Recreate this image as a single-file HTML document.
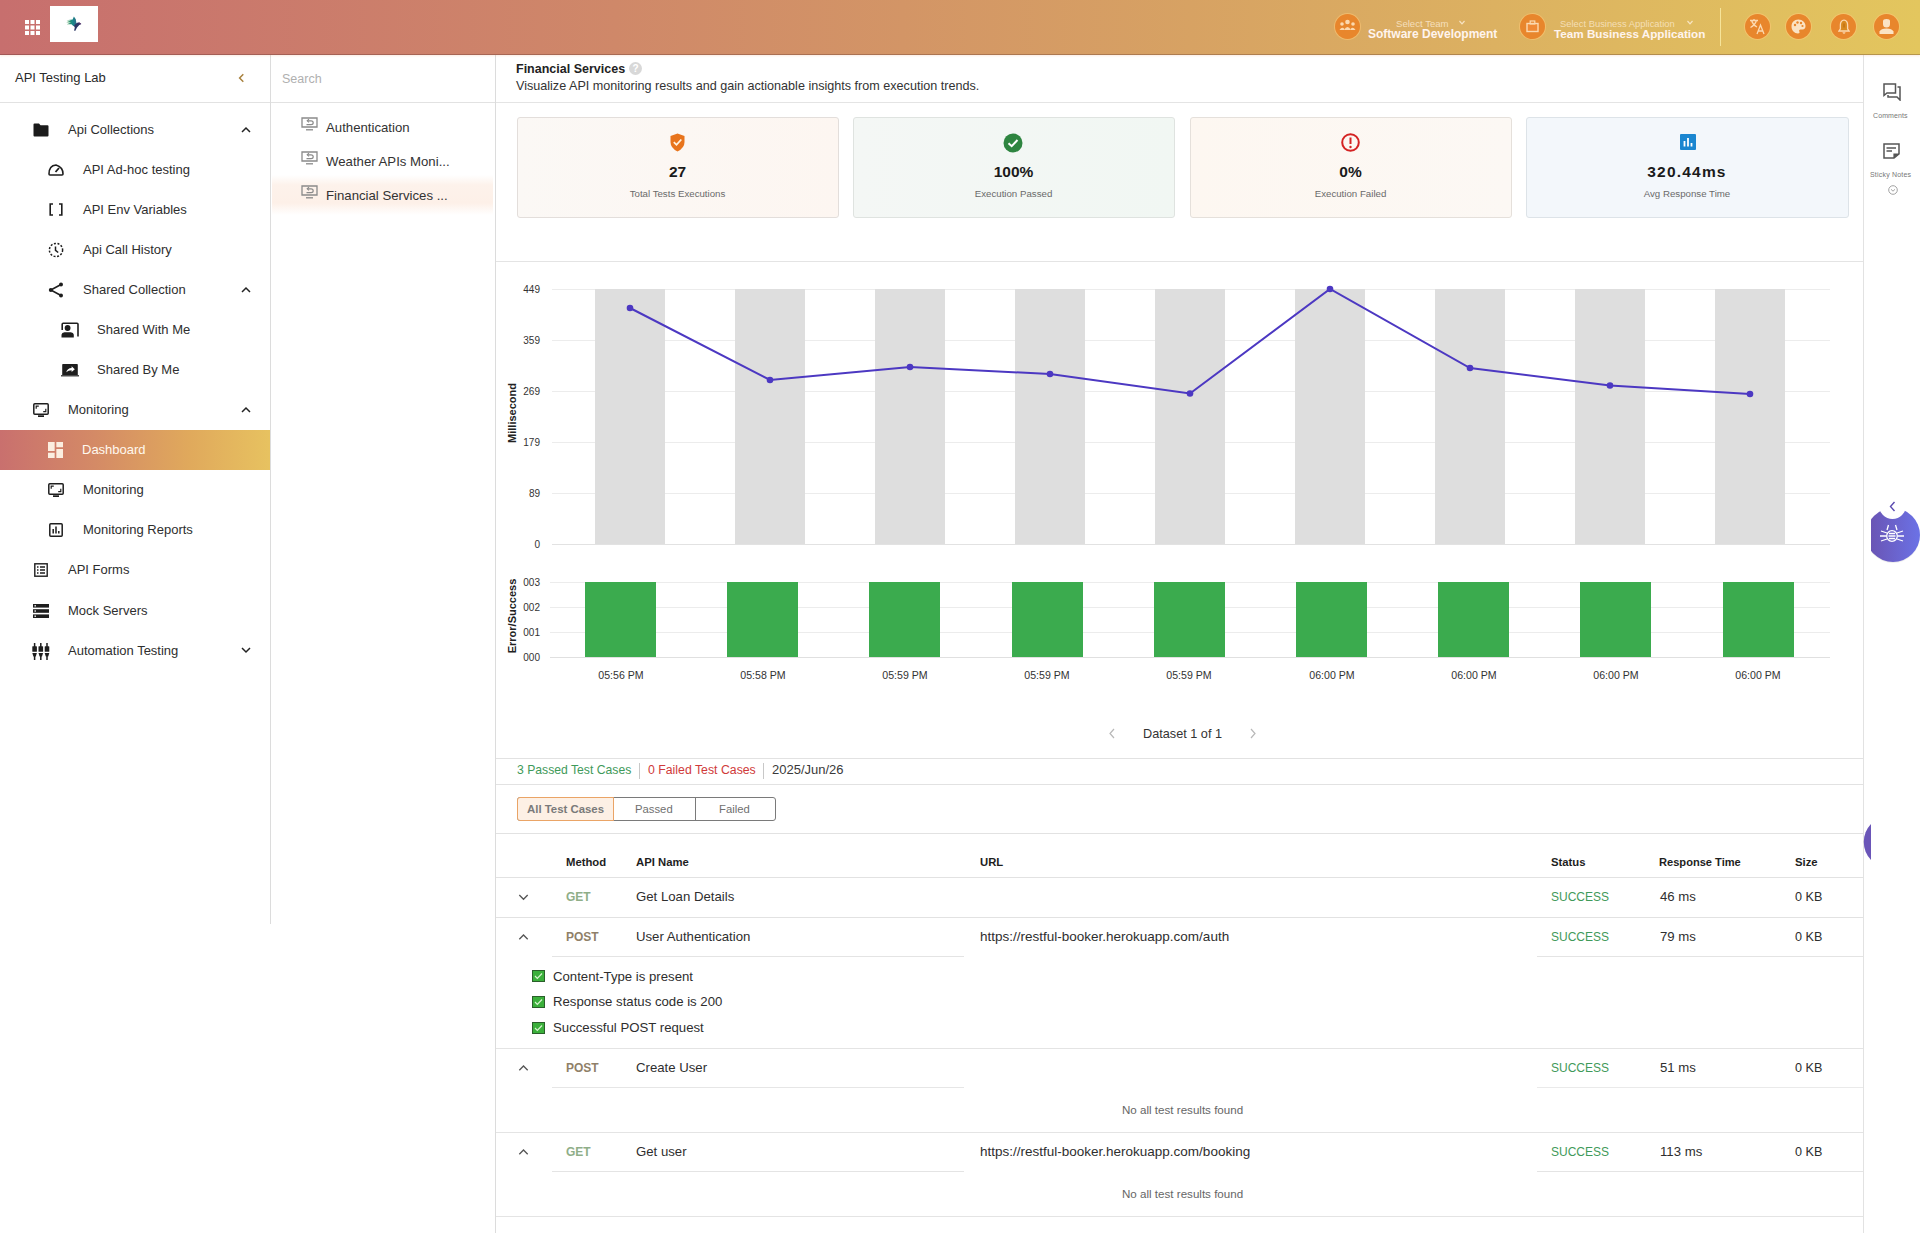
<!DOCTYPE html>
<html><head><meta charset="utf-8">
<style>
*{box-sizing:border-box;margin:0;padding:0}
html,body{width:1920px;height:1233px;overflow:hidden;background:#fff;font-family:"Liberation Sans",sans-serif;color:#2b2b2b}
.abs{position:absolute}
.t{position:absolute;white-space:nowrap;line-height:1}
#hdr{position:absolute;left:0;top:0;width:1920px;height:55px;box-shadow:inset 0 -1px 0 rgba(70,30,30,.28),0 1px 2px rgba(230,150,100,.18);z-index:5;background:linear-gradient(90deg,#c76f6e 0%,#cf8869 32%,#d7a263 62%,#e3c65e 100%);}
.hc{position:absolute;width:25px;height:25px;border-radius:50%;background:#e8862c;box-shadow:0 0 0 1px rgba(255,200,120,.55)}
.hl{height:1px;background:#e3e3e3;position:absolute}
.vl{width:1px;background:#dcdcdc;position:absolute}
.nav{position:absolute;font-size:13px;color:#2e2e2e;white-space:nowrap;line-height:1}
.ico{position:absolute}
</style></head><body>

<!-- HEADER -->
<div id="hdr">
  <svg class="abs" style="left:25px;top:20px" width="15" height="15" viewBox="0 0 15 15" fill="#fff">
    <rect x="0" y="0" width="4" height="4"/><rect x="5.5" y="0" width="4" height="4"/><rect x="11" y="0" width="4" height="4"/>
    <rect x="0" y="5.5" width="4" height="4"/><rect x="5.5" y="5.5" width="4" height="4"/><rect x="11" y="5.5" width="4" height="4"/>
    <rect x="0" y="11" width="4" height="4"/><rect x="5.5" y="11" width="4" height="4"/><rect x="11" y="11" width="4" height="4"/>
  </svg>
  <div class="abs" style="left:50px;top:6px;width:48px;height:36px;background:#fff"></div>
  <svg class="abs" style="left:60px;top:10px" width="30" height="28" viewBox="60 10 30 28">
    <defs><linearGradient id="bd" x1="0" y1="0" x2="1" y2="0"><stop offset="0" stop-color="#3a9a4a"/><stop offset="0.6" stop-color="#1a8a88"/><stop offset="1" stop-color="#2a6a8a"/></linearGradient></defs>
    <path d="M66.3 20.3 L71 20.6 L66.3 22.2 L71 22.5 L66.8 24.3 L71.5 24.2 L73.5 26.3 L76.6 24.5 L75.8 19.2 L73.9 16.6 L72.6 19.6Z" fill="url(#bd)"/>
    <path d="M73.8 25.8 L77 22.8 L79.3 22.6 L81.3 24 L79.3 25.1 L77 27.5 L75.2 30.9 L74.1 30.5 L74.8 27.6Z" fill="#2a3563"/>
    <path d="M78.2 22.7 L79.5 22.5 L81.3 24 L79.4 24.6Z" fill="#5a2f6a"/>
  </svg>

  <div class="hc" style="left:1335px;top:14px"></div>
  <svg class="abs" style="left:1339px;top:19px" width="17" height="14" viewBox="0 0 17 14" fill="#fbd9b0">
    <circle cx="8.5" cy="3" r="2.3"/><circle cx="3" cy="5" r="1.8"/><circle cx="14" cy="5" r="1.8"/>
    <path d="M5 11 Q8.5 5 12 11 Z"/><path d="M0.5 11 Q3 7 5.5 10 L5 11Z"/><path d="M16.5 11 Q14 7 11.5 10 L12 11Z"/>
  </svg>
  <div class="t" style="left:1396px;top:19px;font-size:9.6px;color:rgba(255,240,220,.75)">Select Team</div>
  <svg class="abs" style="left:1459px;top:20px" width="6" height="5" viewBox="0 0 6 5"><path d="M0.5 1 L3 3.8 L5.5 1" stroke="rgba(255,240,220,.8)" stroke-width="1.2" fill="none"/></svg>
  <div class="t" style="left:1368px;top:28px;font-size:12px;font-weight:700;color:#fff4ee">Software Development</div>

  <div class="hc" style="left:1520px;top:14px"></div>
  <svg class="abs" style="left:1526px;top:20px" width="13" height="13" viewBox="0 0 13 13"><rect x="1" y="3.5" width="11" height="8" fill="#f08a35" stroke="#fbd9b0" stroke-width="1.4"/><rect x="4.2" y="1" width="4.6" height="3" fill="none" stroke="#fbd9b0" stroke-width="1.2"/></svg>
  <div class="t" style="left:1560px;top:19px;font-size:9.4px;color:rgba(255,240,220,.7)">Select Business Application</div>
  <svg class="abs" style="left:1687px;top:20px" width="6" height="5" viewBox="0 0 6 5"><path d="M0.5 1 L3 3.8 L5.5 1" stroke="rgba(255,240,220,.8)" stroke-width="1.2" fill="none"/></svg>
  <div class="t" style="left:1554px;top:28px;font-size:11.7px;font-weight:700;color:#fff4ee">Team Business Application</div>

  <div class="abs" style="left:1720px;top:8px;width:1px;height:38px;background:#f6e49a"></div>

  <div class="hc" style="left:1745px;top:14px"></div>
  <svg class="abs" style="left:1749px;top:18px" width="17" height="17" viewBox="0 0 17 17" stroke="#fbd9b0" stroke-width="1.3" fill="none">
    <path d="M1 2.5 H9 M5 1 V2.5 M2.5 2.5 Q4 7 8 9 M7.5 2.5 Q6 7 1.5 9.5"/>
    <path d="M8 16 L11.5 7 L15 16 M9.2 13 H13.8"/>
  </svg>
  <div class="hc" style="left:1786px;top:14px"></div>
  <svg class="abs" style="left:1790px;top:18px" width="17" height="17" viewBox="0 0 17 17">
    <path d="M8.5 1.5 C4 1.5 1.5 4.5 1.5 8.5 C1.5 12.5 4.5 15.5 8 15.5 C9.5 15.5 9.8 14.5 9.3 13.5 C8.8 12.5 9.2 11.5 10.5 11.5 L12.5 11.5 C14.5 11.5 15.5 10 15.5 8 C15.5 4.5 12.5 1.5 8.5 1.5Z" fill="#fbe3c4"/>
    <circle cx="5" cy="7" r="1.2" fill="#e8862c"/><circle cx="7.5" cy="4.5" r="1.2" fill="#e8862c"/><circle cx="11" cy="5" r="1.2" fill="#e8862c"/><circle cx="12.5" cy="8" r="1.1" fill="#e8862c"/>
  </svg>
  <div class="hc" style="left:1831px;top:14px"></div>
  <svg class="abs" style="left:1838px;top:19px" width="12" height="16" viewBox="0 0 12 16">
    <path d="M6 1.2 C3.6 1.2 2.4 3.3 2.4 5.8 L2.4 9.8 L1 12 H11 L9.6 9.8 L9.6 5.8 C9.6 3.3 8.4 1.2 6 1.2Z" fill="#d9891f" stroke="#fbd9b0" stroke-width="1.3"/>
    <path d="M6 4.5 V8.5" stroke="#b86a10" stroke-width="1.1"/>
    <path d="M4.8 13.4 Q6 14.8 7.2 13.4" stroke="#fbd9b0" stroke-width="1.1" fill="none"/>
  </svg>
  <div class="hc" style="left:1874px;top:14px"></div>
  <svg class="abs" style="left:1878px;top:18px" width="17" height="17" viewBox="0 0 17 17" fill="#fbe3c4">
    <path d="M5 3 Q5 1 8.5 1 Q12 1 12 3 L12 6 Q12 9.5 8.5 9.5 Q5 9.5 5 6Z"/>
    <path d="M1.5 16 L1.5 13.5 Q3 10.5 8.5 10.5 Q14 10.5 15.5 13.5 L15.5 16Z"/>
  </svg>
</div>

<!-- LEFT SIDEBAR -->
<div class="vl" style="left:270px;top:54px;height:870px"></div>
<div class="t" style="left:15px;top:71px;font-size:13px;color:#2a2a2a">API Testing Lab</div>
<svg class="abs" style="left:237px;top:73px" width="9" height="10" viewBox="0 0 9 10"><path d="M6.3 1.2 L2.6 5 L6.3 8.8" stroke="#a8823e" stroke-width="1.5" fill="none"/></svg>
<div class="hl" style="left:0;top:102px;width:270px;background:#e2e2e2"></div>

<!-- nav: row centers 129.5 + 40*i ; cap top = center-4.5 -->
<svg class="ico" style="left:33px;top:123px" width="16" height="14" viewBox="0 0 16 14"><path d="M0.5 1.5 Q0.5 0.5 1.5 0.5 L6 0.5 L7.5 2.3 L14.5 2.3 Q15.5 2.3 15.5 3.3 L15.5 12.5 Q15.5 13.5 14.5 13.5 L1.5 13.5 Q0.5 13.5 0.5 12.5Z" fill="#1b1b1b"/></svg>
<div class="nav" style="left:68px;top:123px">Api Collections</div>
<svg class="ico" style="left:241px;top:126px" width="10" height="7" viewBox="0 0 10 7"><path d="M1 6 L5 2 L9 6" stroke="#222" stroke-width="1.5" fill="none"/></svg>

<svg class="ico" style="left:48px;top:163px" width="16" height="13" viewBox="0 0 16 13"><path d="M2 12 L14 12 Q15 12 15 11 Q15 4 8 2 Q1 2.5 1 11 Q1 12 2 12Z" fill="none" stroke="#1e1e1e" stroke-width="1.6"/><path d="M7.5 9 L11 5" stroke="#1e1e1e" stroke-width="1.8"/></svg>
<div class="nav" style="left:83px;top:163px">API Ad-hoc testing</div>

<svg class="ico" style="left:49px;top:203px" width="14" height="13" viewBox="0 0 14 13"><path d="M4 1 H1.2 V12 H4 M10 1 H12.8 V12 H10" stroke="#1e1e1e" stroke-width="1.6" fill="none"/></svg>
<div class="nav" style="left:83px;top:203px">API Env Variables</div>

<svg class="ico" style="left:48px;top:242px" width="16" height="16" viewBox="0 0 16 16"><circle cx="8" cy="8" r="6.6" fill="none" stroke="#1e1e1e" stroke-width="1.5" stroke-dasharray="2 1.6"/><path d="M7.5 4.5 V8.3 L10.2 10.5" stroke="#1e1e1e" stroke-width="1.5" fill="none"/></svg>
<div class="nav" style="left:83px;top:243px">Api Call History</div>

<svg class="ico" style="left:48px;top:282px" width="16" height="16" viewBox="0 0 16 16"><circle cx="13" cy="2.5" r="2" fill="#1e1e1e"/><circle cx="2.8" cy="8" r="2" fill="#1e1e1e"/><circle cx="13" cy="13.5" r="2" fill="#1e1e1e"/><path d="M13 2.5 L2.8 8 L13 13.5" stroke="#1e1e1e" stroke-width="1.6" fill="none"/></svg>
<div class="nav" style="left:83px;top:283px">Shared Collection</div>
<svg class="ico" style="left:241px;top:286px" width="10" height="7" viewBox="0 0 10 7"><path d="M1 6 L5 2 L9 6" stroke="#222" stroke-width="1.5" fill="none"/></svg>

<svg class="ico" style="left:61px;top:322px" width="18" height="16" viewBox="0 0 18 16"><path d="M1.2 8 V2.2 Q1.2 1.2 2.2 1.2 H16 Q17 1.2 17 2.2 V14.5" stroke="#1e1e1e" stroke-width="1.6" fill="none"/><circle cx="6.6" cy="6" r="2.9" fill="#1e1e1e"/><path d="M0.5 15.5 V12.8 Q0.8 10.3 3.5 10.2 H9.8 Q12.5 10.3 12.8 12.8 V15.5Z" fill="#1e1e1e"/></svg>
<div class="nav" style="left:97px;top:323px">Shared With Me</div>

<svg class="ico" style="left:61px;top:363px" width="18" height="14" viewBox="0 0 18 14"><path d="M1.2 1.8 Q1.2 1 2 1 H16 Q16.8 1 16.8 1.8 V12 H1.2Z" fill="#1e1e1e"/><path d="M0 12.2 H18 V13.4 H0Z" fill="#1e1e1e"/><path d="M5.2 9.2 Q6.3 5.3 10.6 5 L10.6 3.3 L13.8 6.2 L10.6 9 L10.6 7.3 Q7.3 7.3 5.2 9.2Z" fill="#fff"/></svg>
<div class="nav" style="left:97px;top:363px">Shared By Me</div>

<svg class="ico" style="left:33px;top:403px" width="16" height="14" viewBox="0 0 16 14"><rect x="0.8" y="0.8" width="14.4" height="10.5" rx="1" fill="none" stroke="#1e1e1e" stroke-width="1.5"/><path d="M5 13.2 H11" stroke="#1e1e1e" stroke-width="1.8"/><path d="M3.2 5.8 V3.2 H5.8 M12.8 5.8 V8.6 H10.2" stroke="#1e1e1e" stroke-width="1.2" fill="none"/></svg>
<div class="nav" style="left:68px;top:403px">Monitoring</div>
<svg class="ico" style="left:241px;top:406px" width="10" height="7" viewBox="0 0 10 7"><path d="M1 6 L5 2 L9 6" stroke="#222" stroke-width="1.5" fill="none"/></svg>

<div class="abs" style="left:0;top:430px;width:270px;height:40px;background:linear-gradient(90deg,#c9706e 0%,#d48a66 35%,#e0a95c 70%,#e7c260 100%)"></div>
<svg class="ico" style="left:48px;top:442px" width="15" height="16" viewBox="3 3 18 18" preserveAspectRatio="none" fill="#fbeee0"><path d="M3 13h8V3H3v10zm0 8h8v-6H3v6zm10 0h8V11h-8v10zm0-18v6h8V3h-8z"/></svg>
<div class="nav" style="left:82px;top:443px;color:#fff8ee">Dashboard</div>

<svg class="ico" style="left:48px;top:483px" width="16" height="14" viewBox="0 0 16 14"><rect x="0.8" y="0.8" width="14.4" height="10.5" rx="1" fill="none" stroke="#1e1e1e" stroke-width="1.5"/><path d="M5 13.2 H11" stroke="#1e1e1e" stroke-width="1.8"/><path d="M3.2 5.8 V3.2 H5.8 M12.8 5.8 V8.6 H10.2" stroke="#1e1e1e" stroke-width="1.2" fill="none"/></svg>
<div class="nav" style="left:83px;top:483px">Monitoring</div>

<svg class="ico" style="left:49px;top:523px" width="14" height="14" viewBox="0 0 14 14"><rect x="0.8" y="0.8" width="12.4" height="12.4" rx="1" fill="none" stroke="#1e1e1e" stroke-width="1.5"/><path d="M4.2 6 V10.5 M7 3.5 V10.5 M9.8 8 V10.5" stroke="#1e1e1e" stroke-width="1.5"/></svg>
<div class="nav" style="left:83px;top:523px">Monitoring Reports</div>

<svg class="ico" style="left:34px;top:563px" width="14" height="14" viewBox="0 0 14 14"><rect x="0.8" y="0.8" width="12.4" height="12.4" fill="none" stroke="#1e1e1e" stroke-width="1.4"/><path d="M3 4 H4.5 M6 4 H11 M3 7 H4.5 M6 7 H11 M3 10 H4.5 M6 10 H11" stroke="#1e1e1e" stroke-width="1.3"/></svg>
<div class="nav" style="left:68px;top:563px">API Forms</div>

<svg class="ico" style="left:33px;top:604px" width="16" height="14" viewBox="0 0 16 14" fill="#1e1e1e"><rect x="0" y="0" width="16" height="3.6"/><rect x="0" y="5.2" width="16" height="3.6"/><rect x="0" y="10.4" width="16" height="3.6"/><rect x="1.5" y="1.1" width="1.4" height="1.4" fill="#fff"/><rect x="1.5" y="6.3" width="1.4" height="1.4" fill="#fff"/><rect x="1.5" y="11.5" width="1.4" height="1.4" fill="#fff"/></svg>
<div class="nav" style="left:68px;top:604px">Mock Servers</div>

<svg class="ico" style="left:32px;top:643px" width="18" height="17" viewBox="0 0 18 17" fill="#1e1e1e"><rect x="1.85" y="0" width="1.5" height="4" /><rect x="0.30000000000000027" y="3.2" width="4.6" height="5.6" rx=".6"/><path d="M0.30000000000000027 10 H4.9 L3.8 13.5 H1.4000000000000001Z"/><rect x="1.85" y="13" width="1.5" height="4"/><rect x="8.05" y="0" width="1.5" height="4" /><rect x="6.500000000000001" y="3.2" width="4.6" height="5.6" rx=".6"/><path d="M6.500000000000001 10 H11.100000000000001 L10.0 13.5 H7.6000000000000005Z"/><rect x="8.05" y="13" width="1.5" height="4"/><rect x="14.25" y="0" width="1.5" height="4" /><rect x="12.7" y="3.2" width="4.6" height="5.6" rx=".6"/><path d="M12.7 10 H17.3 L16.2 13.5 H13.8Z"/><rect x="14.25" y="13" width="1.5" height="4"/></svg>
<div class="nav" style="left:68px;top:644px">Automation Testing</div>
<svg class="ico" style="left:241px;top:647px" width="10" height="7" viewBox="0 0 10 7"><path d="M1 1 L5 5 L9 1" stroke="#222" stroke-width="1.5" fill="none"/></svg>

<!-- SECOND PANEL -->
<div class="vl" style="left:495px;top:54px;height:1179px"></div>
<div class="t" style="left:282px;top:73px;font-size:12.5px;color:#b0b0b0">Search</div>
<div class="hl" style="left:271px;top:102px;width:224px;background:#e2e2e2"></div>
<div class="abs" style="left:272px;top:175px;width:221px;height:40px;background:linear-gradient(180deg,rgba(253,242,235,0) 0%,#fdf2eb 25%,#fdf0e8 70%,rgba(253,242,235,0) 100%)"></div>
<svg class="ico" style="left:301px;top:117px" width="17" height="14" viewBox="0 0 17 14"><path d="M1 1 H16 V10 H1Z" fill="none" stroke="#8a8a8a" stroke-width="1.3"/><path d="M5 12.8 H12" stroke="#8a8a8a" stroke-width="1.3"/><path d="M6.5 3.8 H10 Q12.2 3.8 12.2 5.7 Q12.2 7.6 10 7.6 H5.5" stroke="#8a8a8a" stroke-width="1.2" fill="none"/><path d="M8 2.2 L6.2 3.8 L8 5.4" stroke="#8a8a8a" stroke-width="1.1" fill="none"/></svg>
<div class="t" style="left:326px;top:121px;font-size:13.2px;color:#333">Authentication</div>
<svg class="ico" style="left:301px;top:151px" width="17" height="14" viewBox="0 0 17 14"><path d="M1 1 H16 V10 H1Z" fill="none" stroke="#8a8a8a" stroke-width="1.3"/><path d="M5 12.8 H12" stroke="#8a8a8a" stroke-width="1.3"/><path d="M6.5 3.8 H10 Q12.2 3.8 12.2 5.7 Q12.2 7.6 10 7.6 H5.5" stroke="#8a8a8a" stroke-width="1.2" fill="none"/><path d="M8 2.2 L6.2 3.8 L8 5.4" stroke="#8a8a8a" stroke-width="1.1" fill="none"/></svg>
<div class="t" style="left:326px;top:155px;font-size:13.2px;color:#333">Weather APIs Moni...</div>
<svg class="ico" style="left:301px;top:185px" width="17" height="14" viewBox="0 0 17 14"><path d="M1 1 H16 V10 H1Z" fill="none" stroke="#8a8a8a" stroke-width="1.3"/><path d="M5 12.8 H12" stroke="#8a8a8a" stroke-width="1.3"/><path d="M6.5 3.8 H10 Q12.2 3.8 12.2 5.7 Q12.2 7.6 10 7.6 H5.5" stroke="#8a8a8a" stroke-width="1.2" fill="none"/><path d="M8 2.2 L6.2 3.8 L8 5.4" stroke="#8a8a8a" stroke-width="1.1" fill="none"/></svg>
<div class="t" style="left:326px;top:189px;font-size:13.2px;color:#333">Financial Services ...</div>

<!-- MAIN -->
<div class="t" style="left:516px;top:63px;font-size:12.5px;font-weight:700;color:#222">Financial Services</div>
<div class="abs" style="left:629px;top:62px;width:13px;height:13px;border-radius:50%;background:#d8d8d8;color:#fff;font-size:10px;font-weight:700;text-align:center;line-height:13px">?</div>
<div class="t" style="left:516px;top:80px;font-size:12.6px;color:#333">Visualize API monitoring results and gain actionable insights from execution trends.</div>
<div class="hl" style="left:496px;top:102px;width:1367px;background:#e4e4e4"></div>

<!-- CARDS -->
<div class="abs" style="left:517px;top:117px;width:322px;height:101px;border:1px solid #e3dedb;border-radius:3px;background:linear-gradient(90deg,#fbf8f5,#fdf6f1)"></div>
<div class="abs" style="left:853px;top:117px;width:322px;height:101px;border:1px solid #dfe3e0;border-radius:3px;background:linear-gradient(90deg,#f4f7f5,#f1f7f3)"></div>
<div class="abs" style="left:1190px;top:117px;width:322px;height:101px;border:1px solid #e5e0db;border-radius:3px;background:linear-gradient(90deg,#fdf7f1,#fcf8f4)"></div>
<div class="abs" style="left:1526px;top:117px;width:323px;height:101px;border:1px solid #dde3e8;border-radius:3px;background:#f3f7fb"></div>

<svg class="ico" style="left:670px;top:133px" width="15" height="19" viewBox="0 0 15 19"><path d="M7.5 0.5 L14.5 3 L14.5 9 Q14.5 15 7.5 18.5 Q0.5 15 0.5 9 L0.5 3Z" fill="#e8741c"/><path d="M3.8 9.2 L6.5 11.8 L11.3 6.5" stroke="#fff3e0" stroke-width="1.8" fill="none"/></svg>
<div class="t" style="left:517px;width:321px;text-align:center;top:164px;font-size:15.5px;font-weight:700;color:#1a1a1a">27</div>
<div class="t" style="left:517px;width:321px;text-align:center;top:189px;font-size:9.7px;color:#6a6a6a">Total Tests Executions</div>

<svg class="ico" style="left:1003px;top:133px" width="20" height="20" viewBox="0 0 20 20"><circle cx="10" cy="10" r="9.5" fill="#2e8540"/><path d="M5.5 10.2 L8.7 13.2 L14.5 7" stroke="#fff" stroke-width="2" fill="none"/></svg>
<div class="t" style="left:853px;width:321px;text-align:center;top:164px;font-size:15.5px;font-weight:700;color:#1a1a1a">100%</div>
<div class="t" style="left:853px;width:321px;text-align:center;top:189px;font-size:9.7px;color:#6a6a6a">Execution Passed</div>

<svg class="ico" style="left:1341px;top:133px" width="19" height="19" viewBox="0 0 19 19"><circle cx="9.5" cy="9.5" r="8.3" fill="none" stroke="#d42323" stroke-width="2"/><path d="M9.5 4.5 V11" stroke="#d42323" stroke-width="2"/><circle cx="9.5" cy="14" r="1.2" fill="#d42323"/></svg>
<div class="t" style="left:1190px;width:321px;text-align:center;top:164px;font-size:15.5px;font-weight:700;color:#1a1a1a">0%</div>
<div class="t" style="left:1190px;width:321px;text-align:center;top:189px;font-size:9.7px;color:#6a6a6a">Execution Failed</div>

<svg class="ico" style="left:1680px;top:134px" width="16" height="16" viewBox="0 0 16 16"><rect x="0" y="0" width="16" height="16" rx="1" fill="#1b86d0"/><path d="M4.5 7 V12.5 M8 4 V12.5 M11.5 9 V12.5" stroke="#fff" stroke-width="1.8"/></svg>
<div class="t" style="left:1526px;width:322px;text-align:center;top:164px;font-size:15.5px;font-weight:700;color:#1a1a1a;letter-spacing:1.2px">320.44ms</div>
<div class="t" style="left:1526px;width:322px;text-align:center;top:189px;font-size:9.7px;color:#6a6a6a">Avg Response Time</div>

<div class="hl" style="left:496px;top:261px;width:1367px;background:#e4e4e4"></div>

<!-- CHART -->
<svg class="abs" style="left:496px;top:262px" width="1367" height="496" viewBox="496 262 1367 496" font-family="Liberation Sans, sans-serif">
  <g stroke="#ececec" stroke-width="1">
    <path d="M552 289.5 H1830 M552 340.5 H1830 M552 391.5 H1830 M552 442.5 H1830 M552 493.5 H1830"/>
  </g>
  <g fill="#dedede">
    <rect x="595" y="289" width="70" height="255"/><rect x="735" y="289" width="70" height="255"/><rect x="875" y="289" width="70" height="255"/>
    <rect x="1015" y="289" width="70" height="255"/><rect x="1155" y="289" width="70" height="255"/><rect x="1295" y="289" width="70" height="255"/>
    <rect x="1435" y="289" width="70" height="255"/><rect x="1575" y="289" width="70" height="255"/><rect x="1715" y="289" width="70" height="255"/>
  </g>
  <path d="M552 544.5 H1830" stroke="#e2e2e2" stroke-width="1"/>
  <g fill="#333" font-size="10" text-anchor="end">
    <text x="540" y="292.5">449</text><text x="540" y="343.5">359</text><text x="540" y="394.5">269</text>
    <text x="540" y="445.5">179</text><text x="540" y="496.5">89</text><text x="540" y="547.5">0</text>
  </g>
  <text x="0" y="0" transform="translate(516 413) rotate(-90)" text-anchor="middle" font-size="11" font-weight="700" fill="#222">Millisecond</text>
  <polyline points="630,308 770,380 910,367 1050,374 1190,393.5 1330,289 1470,368 1610,385.5 1750,394" fill="none" stroke="#4c38c2" stroke-width="2"/>
  <g fill="#4c38c2">
    <circle cx="630" cy="308" r="3.3"/><circle cx="770" cy="380" r="3.3"/><circle cx="910" cy="367" r="3.3"/><circle cx="1050" cy="374" r="3.3"/><circle cx="1190" cy="393.5" r="3.3"/>
    <circle cx="1330" cy="289" r="3.3"/><circle cx="1470" cy="368" r="3.3"/><circle cx="1610" cy="385.5" r="3.3"/><circle cx="1750" cy="394" r="3.3"/>
  </g>

  <g stroke="#ececec" stroke-width="1">
    <path d="M550 582.5 H1830 M550 607.5 H1830 M550 632.5 H1830"/>
  </g>
  <path d="M550 657.5 H1830" stroke="#e0e0e0" stroke-width="1"/>
  <g fill="#3bab4e">
    <rect x="585" y="582" width="71" height="75"/><rect x="727" y="582" width="71" height="75"/><rect x="869" y="582" width="71" height="75"/>
    <rect x="1012" y="582" width="71" height="75"/><rect x="1154" y="582" width="71" height="75"/><rect x="1296" y="582" width="71" height="75"/>
    <rect x="1438" y="582" width="71" height="75"/><rect x="1580" y="582" width="71" height="75"/><rect x="1723" y="582" width="71" height="75"/>
  </g>
  <g fill="#333" font-size="10" text-anchor="end">
    <text x="540" y="585.5">003</text><text x="540" y="610.5">002</text><text x="540" y="635.5">001</text><text x="540" y="660.5">000</text>
  </g>
  <text x="0" y="0" transform="translate(516 616) rotate(-90)" text-anchor="middle" font-size="11" font-weight="700" fill="#222">Error/Success</text>
  <g fill="#333" font-size="10.6" text-anchor="middle">
    <text x="621" y="679">05:56 PM</text><text x="763" y="679">05:58 PM</text><text x="905" y="679">05:59 PM</text>
    <text x="1047" y="679">05:59 PM</text><text x="1189" y="679">05:59 PM</text><text x="1332" y="679">06:00 PM</text>
    <text x="1474" y="679">06:00 PM</text><text x="1616" y="679">06:00 PM</text><text x="1758" y="679">06:00 PM</text>
  </g>
  <path d="M1114 729 L1110 733.5 L1114 738" stroke="#b8b8b8" stroke-width="1.2" fill="none"/>
  <path d="M1251 729 L1255 733.5 L1251 738" stroke="#b8b8b8" stroke-width="1.2" fill="none"/>
</svg>
<div class="t" style="left:1143px;top:728px;font-size:12.7px;color:#333">Dataset 1 of 1</div>

<div class="hl" style="left:496px;top:758px;width:1367px;background:#e2e2e2"></div>

<!-- STATS ROW -->
<div class="t" style="left:517px;top:764px;font-size:12.2px;color:#3f9a5a">3 Passed Test Cases</div>
<div class="abs" style="left:639px;top:763px;width:1px;height:16px;background:#c8c8c8"></div>
<div class="t" style="left:648px;top:764px;font-size:12.3px;color:#d03a3a">0 Failed Test Cases</div>
<div class="abs" style="left:763px;top:763px;width:1px;height:16px;background:#c8c8c8"></div>
<div class="t" style="left:772px;top:763px;font-size:13px;color:#3a3a3a">2025/Jun/26</div>
<div class="hl" style="left:496px;top:784px;width:1367px;background:#e2e2e2"></div>

<!-- TABS -->
<div class="abs" style="left:517px;top:797px;width:259px;height:24px;border:1px solid #7a7a7a;border-radius:3px"></div>
<div class="abs" style="left:517px;top:797px;width:97px;height:24px;border:1px solid #eaa466;border-radius:3px 0 0 3px;background:#fdf0e5"></div>
<div class="abs" style="left:695px;top:797px;width:1px;height:24px;background:#7a7a7a"></div>
<div class="t" style="left:527px;top:804px;font-size:11.4px;font-weight:700;color:#7a7a7a">All Test Cases</div>
<div class="t" style="left:635px;top:804px;font-size:11.3px;color:#707070">Passed</div>
<div class="t" style="left:719px;top:804px;font-size:11.3px;color:#707070">Failed</div>
<div class="hl" style="left:496px;top:833px;width:1367px;background:#e2e2e2"></div>

<!-- TABLE -->
<div class="t" style="left:566px;top:857px;font-size:11.3px;font-weight:700;color:#1e1e1e">Method</div>
<div class="t" style="left:636px;top:857px;font-size:11.3px;font-weight:700;color:#1e1e1e">API Name</div>
<div class="t" style="left:980px;top:857px;font-size:11.3px;font-weight:700;color:#1e1e1e">URL</div>
<div class="t" style="left:1551px;top:857px;font-size:11.3px;font-weight:700;color:#1e1e1e">Status</div>
<div class="t" style="left:1659px;top:857px;font-size:11.1px;font-weight:700;color:#1e1e1e">Response Time</div>
<div class="t" style="left:1795px;top:857px;font-size:11.3px;font-weight:700;color:#1e1e1e">Size</div>
<div class="hl" style="left:496px;top:877px;width:1367px;background:#e2e2e2"></div>

<!-- row1 -->
<svg class="ico" style="left:518px;top:893px" width="11" height="8" viewBox="0 0 11 8"><path d="M1.3 2 L5.5 6.3 L9.7 2" stroke="#555" stroke-width="1.3" fill="none"/></svg>
<div class="t" style="left:566px;top:891px;font-size:12px;font-weight:700;color:#8fae88">GET</div>
<div class="t" style="left:636px;top:890px;font-size:13.2px;color:#2e2e2e">Get Loan Details</div>
<div class="t" style="left:1551px;top:891px;font-size:12px;color:#3f9a5a">SUCCESS</div>
<div class="t" style="left:1660px;top:890px;font-size:13.2px;color:#2e2e2e">46 ms</div>
<div class="t" style="left:1795px;top:891px;font-size:12.6px;color:#2e2e2e">0 KB</div>
<div class="hl" style="left:496px;top:917px;width:1367px;background:#e2e2e2"></div>

<!-- row2 -->
<svg class="ico" style="left:518px;top:933px" width="11" height="8" viewBox="0 0 11 8"><path d="M1.3 6.3 L5.5 2 L9.7 6.3" stroke="#555" stroke-width="1.3" fill="none"/></svg>
<div class="t" style="left:566px;top:931px;font-size:12px;font-weight:700;color:#8f8068">POST</div>
<div class="t" style="left:636px;top:930px;font-size:13.2px;color:#2e2e2e">User Authentication</div>
<div class="t" style="left:980px;top:930px;font-size:13.5px;color:#2e2e2e">https://restful-booker.herokuapp.com/auth</div>
<div class="t" style="left:1551px;top:931px;font-size:12px;color:#3f9a5a">SUCCESS</div>
<div class="t" style="left:1660px;top:930px;font-size:13.2px;color:#2e2e2e">79 ms</div>
<div class="t" style="left:1795px;top:931px;font-size:12.6px;color:#2e2e2e">0 KB</div>
<div class="hl" style="left:552px;top:956px;width:412px;background:#e4e4e4"></div>
<div class="hl" style="left:1537px;top:956px;width:326px;background:#e4e4e4"></div>

<svg class="ico" style="left:532px;top:970px" width="13" height="12" viewBox="0 0 13 12"><rect x="0.5" y="0.5" width="12" height="11" fill="#3bb03b" stroke="#2a5f2a" stroke-width="1"/><path d="M3 6 L5.3 8.3 L10 3.5" stroke="#d8f5d0" stroke-width="1.2" fill="none"/></svg>
<div class="t" style="left:553px;top:970px;font-size:13.2px;color:#2e2e2e">Content-Type is present</div>
<svg class="ico" style="left:532px;top:996px" width="13" height="12" viewBox="0 0 13 12"><rect x="0.5" y="0.5" width="12" height="11" fill="#3bb03b" stroke="#2a5f2a" stroke-width="1"/><path d="M3 6 L5.3 8.3 L10 3.5" stroke="#d8f5d0" stroke-width="1.2" fill="none"/></svg>
<div class="t" style="left:553px;top:995px;font-size:13.2px;color:#2e2e2e">Response status code is 200</div>
<svg class="ico" style="left:532px;top:1022px" width="13" height="12" viewBox="0 0 13 12"><rect x="0.5" y="0.5" width="12" height="11" fill="#3bb03b" stroke="#2a5f2a" stroke-width="1"/><path d="M3 6 L5.3 8.3 L10 3.5" stroke="#d8f5d0" stroke-width="1.2" fill="none"/></svg>
<div class="t" style="left:553px;top:1021px;font-size:13.2px;color:#2e2e2e">Successful POST request</div>
<div class="hl" style="left:496px;top:1048px;width:1367px;background:#e4e4e4"></div>

<!-- row3 -->
<svg class="ico" style="left:518px;top:1064px" width="11" height="8" viewBox="0 0 11 8"><path d="M1.3 6.3 L5.5 2 L9.7 6.3" stroke="#555" stroke-width="1.3" fill="none"/></svg>
<div class="t" style="left:566px;top:1062px;font-size:12px;font-weight:700;color:#8f8068">POST</div>
<div class="t" style="left:636px;top:1061px;font-size:13.2px;color:#2e2e2e">Create User</div>
<div class="t" style="left:1551px;top:1062px;font-size:12px;color:#3f9a5a">SUCCESS</div>
<div class="t" style="left:1660px;top:1061px;font-size:13.2px;color:#2e2e2e">51 ms</div>
<div class="t" style="left:1795px;top:1062px;font-size:12.6px;color:#2e2e2e">0 KB</div>
<div class="hl" style="left:552px;top:1087px;width:412px;background:#e6e6e6"></div>
<div class="hl" style="left:1537px;top:1087px;width:326px;background:#eaeaea"></div>
<div class="t" style="left:1122px;top:1104px;font-size:11.6px;color:#666">No all test results found</div>
<div class="hl" style="left:496px;top:1132px;width:1367px;background:#e4e4e4"></div>

<!-- row4 -->
<svg class="ico" style="left:518px;top:1148px" width="11" height="8" viewBox="0 0 11 8"><path d="M1.3 6.3 L5.5 2 L9.7 6.3" stroke="#555" stroke-width="1.3" fill="none"/></svg>
<div class="t" style="left:566px;top:1146px;font-size:12px;font-weight:700;color:#8fae88">GET</div>
<div class="t" style="left:636px;top:1145px;font-size:13.2px;color:#2e2e2e">Get user</div>
<div class="t" style="left:980px;top:1145px;font-size:13.5px;color:#2e2e2e">https://restful-booker.herokuapp.com/booking</div>
<div class="t" style="left:1551px;top:1146px;font-size:12px;color:#3f9a5a">SUCCESS</div>
<div class="t" style="left:1660px;top:1145px;font-size:13.2px;color:#2e2e2e">113 ms</div>
<div class="t" style="left:1795px;top:1146px;font-size:12.6px;color:#2e2e2e">0 KB</div>
<div class="hl" style="left:552px;top:1171px;width:412px;background:#e4e4e4"></div>
<div class="hl" style="left:1537px;top:1171px;width:326px;background:#e4e4e4"></div>
<div class="t" style="left:1122px;top:1188px;font-size:11.6px;color:#666">No all test results found</div>
<div class="hl" style="left:496px;top:1216px;width:1367px;background:#e4e4e4"></div>

<!-- RIGHT RAIL -->
<div class="vl" style="left:1863px;top:54px;height:1179px;background:#e2e2e2"></div>
<svg class="ico" style="left:1883px;top:83px" width="18" height="18" viewBox="0 0 18 18"><path d="M1 1 H12.5 V10 H4 L1 12.5Z" fill="none" stroke="#555" stroke-width="1.5"/><path d="M14.5 4 H17 V17 L14 14 H5 V12" fill="none" stroke="#555" stroke-width="1.5"/></svg>
<div class="t" style="left:1873px;top:112px;font-size:7px;color:#777;letter-spacing:.1px">Comments</div>
<svg class="ico" style="left:1883px;top:143px" width="17" height="16" viewBox="0 0 17 16"><path d="M1 1 H16 V11 L11 15 H1Z" fill="none" stroke="#555" stroke-width="1.5"/><path d="M11 15 V11 H16" fill="#555" stroke="#555" stroke-width="1.2"/><path d="M3.5 5 H13 M3.5 8 H9" stroke="#555" stroke-width="1.4"/></svg>
<div class="t" style="left:1870px;top:171px;font-size:7px;color:#777;letter-spacing:.2px">Sticky Notes</div>
<svg class="ico" style="left:1888px;top:185px" width="10" height="10" viewBox="0 0 10 10"><circle cx="5" cy="5" r="4.3" fill="none" stroke="#999" stroke-width=".9"/><path d="M3 4.3 L5 6.2 L7 4.3" stroke="#999" stroke-width=".9" fill="none"/></svg>

<!-- bug button -->
<svg class="abs" style="left:1864px;top:492px" width="56" height="75" viewBox="1864 492 56 75">
  <defs><linearGradient id="bg1" x1="0" x2="1" y1="0" y2="0"><stop offset="0" stop-color="#6a52b0"/><stop offset="1" stop-color="#6b72e6"/></linearGradient>
  <clipPath id="cp1"><rect x="1871" y="480" width="60" height="100"/></clipPath></defs>
  <g clip-path="url(#cp1)">
    <circle cx="1893" cy="536" r="27" fill="rgba(0,0,0,.07)"/><circle cx="1893" cy="535" r="27" fill="url(#bg1)"/>
  </g>
  <circle cx="1892.5" cy="505.5" r="13.5" fill="#fff"/>
  <path d="M1894.5 502 L1890.5 506.5 L1894.5 511" stroke="#5a4ab0" stroke-width="1.4" fill="none"/>
  <g stroke="#fff" stroke-width="1.3" fill="none">
    <circle cx="1892" cy="536" r="5.3"/>
    <path d="M1889 533.5 H1895 M1888.5 536 H1895.5 M1889 538.5 H1895"/>
    <path d="M1887 530 L1888.5 525 M1897 530 L1895.5 525 M1880 536 H1886.5 M1897.5 536 H1904 M1881 531 L1887 533 M1903 531 L1897 533 M1881 541 L1887 539 M1903 541 L1897 539"/>
  </g>
</svg>
<svg class="abs" style="left:1863px;top:820px" width="10" height="44" viewBox="0 0 10 44"><path d="M8 4 A26 26 0 0 0 8 40Z" fill="#6a55b8"/></svg>

</body></html>
